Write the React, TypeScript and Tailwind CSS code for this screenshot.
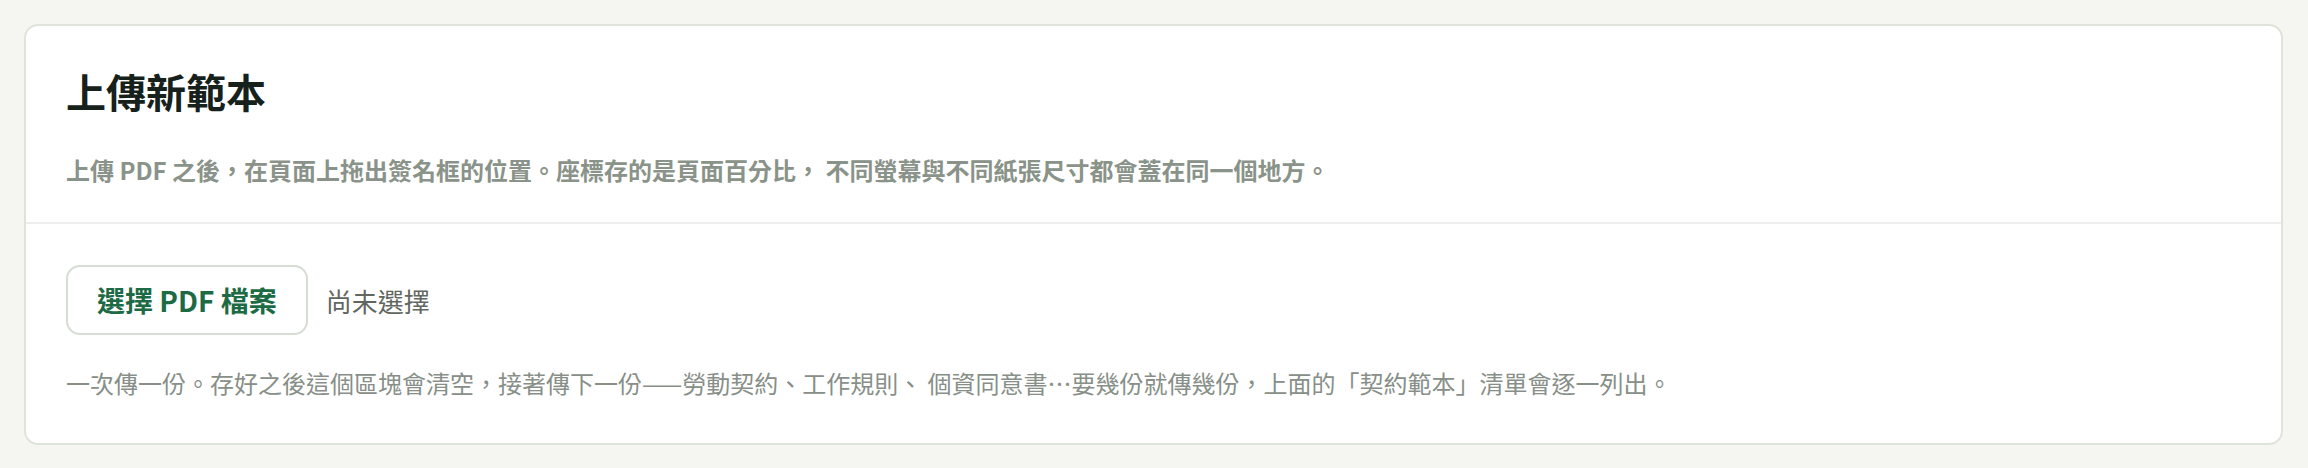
export default function App() {
  return (
    <div
      className="min-h-screen bg-[#f5f6f1] pt-[24px] pb-[24px] pl-[24px] pr-[25px]"
      style={{ fontFamily: '"Noto Sans CJK TC", "Noto Sans", sans-serif' }}
    >
      <section className="rounded-[14px] border-2 border-[#dfe4da] bg-white">
        <header className="border-b-2 border-[#eeeeec] px-[40px] pt-[37px] pb-[34px]">
          <h2 className="text-[40px] font-bold leading-[56px] text-[#17211b]">上傳新範本</h2>
          <p className="mt-[33px] text-[24px] font-bold leading-[36px] text-[#8a9389]">
            上傳 PDF 之後，在頁面上拖出簽名框的位置。座標存的是頁面百分比， 不同螢幕與不同紙張尺寸都會蓋在同一個地方。
          </p>
        </header>

        <div className="px-[40px] pt-[41px] pb-[42px]">
          <div className="flex items-center gap-[18px]">
            <button
              type="button"
              className="h-[70px] rounded-[14px] border-2 border-[#d6ddd3] bg-white px-[29px] text-[28px] font-bold text-[#1d6b45]"
            >
              選擇 PDF 檔案
            </button>
            <span className="text-[26px] text-[#5f6760]">尚未選擇</span>
          </div>
          <p className="mt-[30px] text-[24px] leading-[36px] text-[#878f88]">
            一次傳一份。存好之後這個區塊會清空，接著傳下一份——勞動契約、工作規則、 個資同意書⋯要幾份就傳幾份，上面的「契約範本」清單會逐一列出。
          </p>
        </div>
      </section>
    </div>
  )
}
